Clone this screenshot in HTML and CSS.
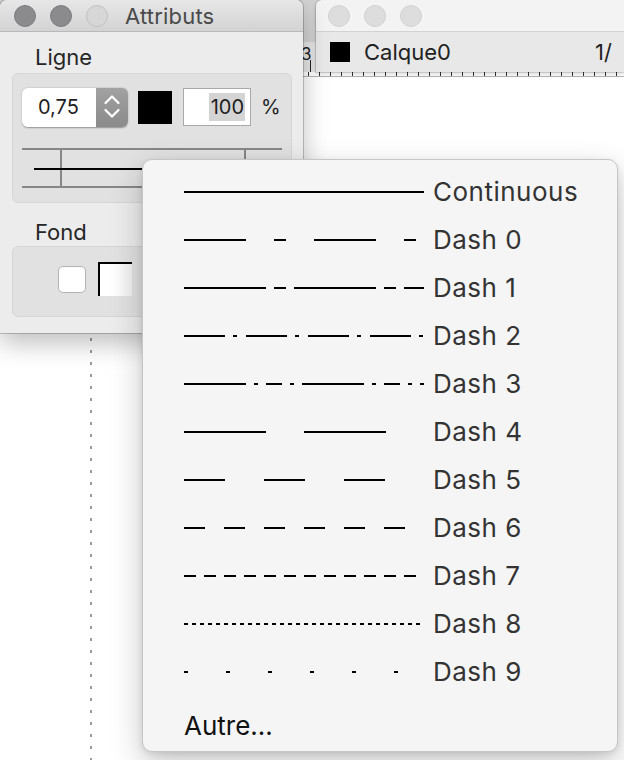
FILE: index.html
```html
<!DOCTYPE html>
<html lang="fr">
<head>
<meta charset="utf-8">
<title>Attributs</title>
<link rel="stylesheet" href="styles.css">
</head>
<body>
<div class="desktop">
  <div class="backwin">
    <div class="back-title"></div>
    <div class="back-toolbar"><span class="back-num">3</span><span class="back-marker"></span></div>
    <div class="ruler"></div>
    <div class="canvas"><div class="guide"></div></div>
  </div>

  <div class="calques">
    <div class="calq-title">
      <span class="tl idle"></span><span class="tl idle"></span><span class="tl idle"></span>
    </div>
    <div class="calq-bar">
      <span class="calq-sq"></span><span class="calq-name">Calque0</span><span class="calq-page">1/</span>
    </div>
  </div>

  <div class="attr">
    <div class="attr-title">
      <span class="tl dark"></span><span class="tl dark"></span><span class="tl off"></span>
      <span class="attr-name">Attributs</span>
    </div>
    <div class="attr-body">
      <div class="label">Ligne</div>
      <div class="group ligne">
        <div class="ctrl-row">
          <div class="stepper">
            <div class="stepper-val">0,75</div>
            <div class="stepper-arrows">
              <svg width="32" height="39" viewBox="0 0 32 39">
                <polyline points="9.5,15 16,8.5 22.5,15" fill="none" stroke="#fff" stroke-width="2.2" stroke-linecap="round" stroke-linejoin="round"/>
                <polyline points="9.5,22 16,28.5 22.5,22" fill="none" stroke="#fff" stroke-width="2.2" stroke-linecap="round" stroke-linejoin="round"/>
              </svg>
            </div>
          </div>
          <div class="swatch-black"></div>
          <div class="pct-field"><span class="sel">100</span></div>
          <span class="pct">%</span>
        </div>
        <svg class="preview" width="260" height="40" viewBox="0 0 260 40">
          <line x1="0" y1="1" x2="260" y2="1" stroke="#878787" stroke-width="2"/>
          <line x1="0" y1="39" x2="260" y2="39" stroke="#878787" stroke-width="2"/>
          <line x1="39" y1="2" x2="39" y2="38" stroke="#878787" stroke-width="2"/>
          <line x1="223" y1="2" x2="223" y2="38" stroke="#878787" stroke-width="2"/>
          <line x1="12" y1="21" x2="248" y2="21" stroke="#000" stroke-width="2"/>
        </svg>
      </div>
      <div class="label fond">Fond</div>
      <div class="group fond-group">
        <div class="fond-row">
          <span class="checkbox"></span>
          <span class="swatch-white"></span>
        </div>
      </div>
    </div>
  </div>

  <div class="menu">
    <div class="mi"><svg viewBox="0 0 240 2"><line x1="0" y1="1" x2="240" y2="1"/></svg><span class="mi-text">Continuous</span></div>
    <div class="mi"><svg viewBox="0 0 240 2"><line x1="0" y1="1" x2="240" y2="1" stroke-dasharray="62 28 12 28"/></svg><span class="mi-text">Dash 0</span></div>
    <div class="mi"><svg viewBox="0 0 240 2"><line x1="0" y1="1" x2="240" y2="1" stroke-dasharray="82 8 12 8"/></svg><span class="mi-text">Dash 1</span></div>
    <div class="mi"><svg viewBox="0 0 240 2"><line x1="0" y1="1" x2="240" y2="1" stroke-dasharray="41 8 4 9"/></svg><span class="mi-text">Dash 2</span></div>
    <div class="mi"><svg viewBox="0 0 240 2"><line x1="0" y1="1" x2="240" y2="1" stroke-dasharray="62 8 4 8 16 8 4 8"/></svg><span class="mi-text">Dash 3</span></div>
    <div class="mi"><svg viewBox="0 0 240 2"><line x1="0" y1="1" x2="240" y2="1" stroke-dasharray="82 38"/></svg><span class="mi-text">Dash 4</span></div>
    <div class="mi"><svg viewBox="0 0 240 2"><line x1="0" y1="1" x2="240" y2="1" stroke-dasharray="41 39"/></svg><span class="mi-text">Dash 5</span></div>
    <div class="mi"><svg viewBox="0 0 240 2"><line x1="0" y1="1" x2="240" y2="1" stroke-dasharray="21 19"/></svg><span class="mi-text">Dash 6</span></div>
    <div class="mi"><svg viewBox="0 0 240 2"><line x1="0" y1="1" x2="240" y2="1" stroke-dasharray="12 8"/></svg><span class="mi-text">Dash 7</span></div>
    <div class="mi"><svg viewBox="0 0 240 2"><line x1="0" y1="1" x2="238" y2="1" stroke-dasharray="4 4"/></svg><span class="mi-text">Dash 8</span></div>
    <div class="mi"><svg viewBox="0 0 240 2"><line x1="0" y1="1" x2="240" y2="1" stroke-dasharray="4 38"/></svg><span class="mi-text">Dash 9</span></div>
    <div class="mi other"><span class="mi-text">Autre...</span></div>
  </div>
</div>
</body>
</html>
```
FILE: styles.css
```css
* { box-sizing: border-box; }

body {
  margin: 0;
  width: 624px;
  height: 760px;
  overflow: hidden;
  background: #fff;
  font-family: Inter, "Noto Sans", "Liberation Sans", sans-serif;
}

.desktop {
  position: relative;
  width: 624px;
  height: 760px;
  overflow: hidden;
}

/* background document window */
.backwin {
  position: absolute;
  inset: 0;
  display: flex;
  flex-direction: column;
}
.back-title { height: 42px; background: #d3d3d3; flex: none; }
.back-toolbar {
  height: 30px;
  flex: none;
  background: #e7e7e7;
  display: flex;
  align-items: flex-start;
  padding-left: 301px;
  padding-top: 2px;
}
.back-num {
  width: 8px;
  font-size: 17px;
  color: #222;
  overflow: visible;
  white-space: nowrap;
}
.back-marker {
  align-self: flex-end;
  width: 1px;
  height: 12px;
  background: #222;
  margin-left: 1px;
}
.ruler {
  height: 5px;
  flex: none;
  background: #fff repeating-linear-gradient(to right, #333 0 1px, transparent 1px 11px);
  border-bottom: 1px solid #b5b5b5;
  background-size: 100% 4px;
  background-repeat: no-repeat;
}
.canvas {
  flex: 1;
  background: #fff;
  padding-left: 90px;
}
.guide {
  width: 2px;
  height: 100%;
  background: repeating-linear-gradient(to bottom, transparent 0 9px, #9a9a9a 9px 12px);
}

/* traffic lights */
.tl {
  width: 22px;
  height: 22px;
  border-radius: 50%;
  flex: none;
}
.tl.dark { background: #8b8b8e; border: 1px solid #7c7c80; }
.tl.off { background: #d7d7d7; border: 1px solid #c0c0c0; }
.tl.idle { background: #dddddd; border: 1px solid #d1d1d1; }

/* calques window */
.calques {
  position: absolute;
  left: 316px;
  top: 0;
  width: 308px;
  border-top-left-radius: 6px;
  overflow: hidden;
  box-shadow: 0 0 0 1px rgba(0,0,0,.12), 0 2px 5px rgba(0,0,0,.16);
}
.calq-title {
  height: 32px;
  background: #f3f3f3;
  border-bottom: 1px solid #d2d2d2;
  display: flex;
  align-items: center;
  padding-left: 12px;
  padding-top: 1px;
  gap: 14px;
}
.calq-bar {
  height: 40px;
  background: #e8e8e8;
  display: flex;
  align-items: center;
  padding: 0 12px 0 14px;
  font-size: 22px;
  color: #222;
}
.calq-sq {
  width: 20px;
  height: 20px;
  background: #000;
  margin-right: 14px;
}
.calq-page { margin-left: auto; }

/* Attributs window */
.attr {
  position: absolute;
  left: 0;
  top: 0;
  width: 303px;
  height: 333px;
  background: #ececec;
  border-radius: 7px 7px 0 0;
  overflow: hidden;
  box-shadow: 0 0 0 1px rgba(0,0,0,.2), 0 10px 26px rgba(0,0,0,.26);
}
.attr-title {
  height: 32px;
  background: linear-gradient(#e7e7e7, #d3d3d3);
  border-bottom: 1px solid #b9b9b9;
  display: flex;
  align-items: center;
  padding-left: 14px;
  padding-top: 1px;
  gap: 14px;
}
.attr-name {
  margin-left: 3px;
  font-size: 22px;
  color: #4a4a4a;
  letter-spacing: 0.2px;
}
.attr-body { padding: 12px 11px 16px 12px; }
.label {
  font-size: 22px;
  line-height: 26px;
  padding-left: 23px;
  color: #262626;
}
.label.fond { margin-top: 16px; }

.group {
  background: #e1e1e1;
  border: 1px solid #d6d6d6;
  border-radius: 6px;
}
.group.ligne {
  margin-top: 3px;
  padding: 13px 9px 14px 9px;
}
.ctrl-row {
  display: flex;
  align-items: center;
  height: 40px;
}
.stepper {
  display: flex;
  width: 106px;
  height: 39px;
  border-radius: 6px;
  overflow: hidden;
  box-shadow: 0 0.5px 1.5px rgba(0,0,0,.35);
}
.stepper-val {
  width: 74px;
  background: #fff;
  font-size: 20px;
  color: #1e1e1e;
  padding-left: 16px;
  display: flex;
  align-items: center;
}
.stepper-arrows {
  width: 32px;
  background: linear-gradient(#a2a2a2, #8a8a8a);
}
.stepper-arrows svg { display: block; }
.swatch-black {
  width: 34px;
  height: 33px;
  background: #000;
  margin-left: 10px;
}
.pct-field {
  margin-left: 11px;
  width: 68px;
  height: 38px;
  border: 1.5px solid #a9a9a9;
  background: #fff;
  display: flex;
  justify-content: flex-end;
  align-items: center;
  padding-right: 5px;
}
.sel {
  background: #d4d4d4;
  font-size: 20px;
  color: #1e1e1e;
  height: 28px;
  line-height: 28px;
  padding: 0 1px 0 2px;
}
.pct {
  margin-left: 10px;
  font-size: 20px;
  color: #1e1e1e;
}
.preview {
  display: block;
  margin-top: 21px;
}

.group.fond-group {
  margin-top: 1px;
  padding: 15px 0 20px 45px;
}
.fond-row {
  display: flex;
  align-items: center;
  height: 34px;
}
.checkbox {
  width: 28px;
  height: 27px;
  background: #fff;
  border: 1px solid #b3b3b3;
  border-radius: 5px;
}
.swatch-white {
  width: 34px;
  height: 34px;
  margin-left: 12px;
  background: linear-gradient(to right, #fff 40%, #f0f0f0);
  border-top: 2px solid #000;
  border-left: 2px solid #000;
}

/* popup menu */
.menu {
  position: absolute;
  left: 142px;
  top: 159px;
  width: 476px;
  height: 593px;
  background: #f5f5f5;
  border: 1px solid #c6c6c6;
  border-radius: 10px;
  box-shadow: 0 12px 32px rgba(0,0,0,.22), 0 2px 6px rgba(0,0,0,.1);
  padding: 8px 0 1px 0;
}
.mi {
  height: 48px;
  display: flex;
  align-items: center;
  padding-left: 41px;
}
.mi svg {
  display: block;
  flex: none;
  width: 240px;
  height: 2px;
}
.mi svg line {
  stroke: #000;
  stroke-width: 2;
}
.mi-text {
  margin-left: 9px;
  font-size: 26px;
  line-height: 48px;
  color: #333;
  letter-spacing: 0.5px;
}
.mi.other { margin-top: 6px; }
.mi.other .mi-text {
  margin-left: 0;
  color: #111;
  letter-spacing: 0;
}
```
